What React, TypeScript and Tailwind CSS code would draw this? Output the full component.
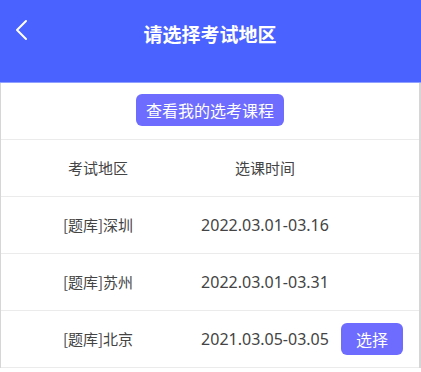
const ROWS = [
	{ area: "[题库]深圳", time: "2022.03.01-03.16", open: false },
	{ area: "[题库]苏州", time: "2022.03.01-03.31", open: false },
	{ area: "[题库]北京", time: "2021.03.05-03.05", open: true },
];

export default function App() {
	return (
		<div
			className="h-[372px] w-[421px] overflow-hidden bg-white"
			style={{ fontFamily: '"Noto Sans CJK SC", "Noto Sans", sans-serif' }}
		>
			<header className="relative flex h-[83px] items-start justify-center border-b border-[#8fa0ff] bg-[#4a62ff] pr-[1px]">
				<button className="absolute left-[14px] top-[19px] p-0 text-white">
					<svg width="14" height="22" viewBox="0 0 14 22" fill="none">
						<path d="M12 2 L3 11 L12 20" stroke="white" strokeWidth="2" strokeLinecap="round" strokeLinejoin="round" />
					</svg>
				</button>
				<h1 className="mt-[21px] text-[19px] font-bold leading-[26px] text-white">请选择考试地区</h1>
			</header>

			<main className="border-x border-[#d6d6d6] border-r-2">
				<div className="flex h-[57px] items-start justify-center border-b border-[#ebebeb] pt-[11px]">
					<button className="h-[32px] w-[148px] rounded-[6px] bg-[#6e6cff] text-[16px] leading-[32px] text-white">
						查看我的选考课程
					</button>
				</div>

				<div className="grid h-[57px] grid-cols-[194px_140px_1fr] items-center border-b border-[#ebebeb] text-[15px] text-[#444]">
					<div className="text-center">考试地区</div>
					<div className="text-center">选课时间</div>
					<div />
				</div>

				{ROWS.map((r) => (
					<div
						key={r.area}
						className="grid h-[57px] grid-cols-[194px_140px_1fr] items-center border-b border-[#ebebeb] text-[15px] text-[#444]"
					>
						<div className="text-center">{r.area}</div>
						<div
							className="text-center text-[16px]"
							style={{ fontFamily: '"Noto Sans", "Noto Sans CJK SC", sans-serif' }}
						>
							{r.time}
						</div>
						<div className="pl-[6px]">
							{r.open && (
								<button className="h-[32px] w-[62px] rounded-[6px] bg-[#6e6cff] text-[16px] leading-[32px] text-white">
									选择
								</button>
							)}
						</div>
					</div>
				))}
			</main>
		</div>
	);
}
